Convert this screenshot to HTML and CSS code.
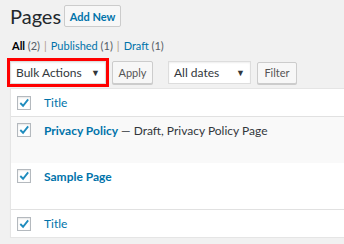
FILE: index.html
```html
<!DOCTYPE html>
<html lang="en">
<head>
    <meta charset="UTF-8">
    <title>Pages</title>
    <link rel="stylesheet" href="styles.css">
</head>
<body>
    <div class="wrap">
        <div class="page-head">
            <h1 class="page-title">Pages</h1>
            <button class="add-new">Add New</button>
        </div>

        <ul class="subsubsub">
            <li class="current">All <span class="count">(2)</span></li>
            <li class="sep">|</li>
            <li><a href="#">Published <span class="count">(1)</span></a></li>
            <li class="sep">|</li>
            <li><a href="#">Draft <span class="count">(1)</span></a></li>
        </ul>

        <div class="tablenav">
            <div class="highlight">
                <div class="select bulk">Bulk Actions <span class="arrow">▼</span></div>
            </div>
            <button class="btn apply">Apply</button>
            <div class="select dates">All dates <span class="arrow">▼</span></div>
            <button class="btn filter">Filter</button>
        </div>

        <div class="list-table">
            <div class="row head">
                <span class="cb"><svg viewBox="0 0 13 13"><path d="M2.5 6.5 L5.5 9.5 L11 2.5" /></svg></span>
                <a class="col-title" href="#">Title</a>
            </div>
            <div class="row item alt">
                <span class="cb"><svg viewBox="0 0 13 13"><path d="M2.5 6.5 L5.5 9.5 L11 2.5" /></svg></span>
                <span class="col-title"><a class="row-title" href="#">Privacy Policy</a> — Draft, Privacy Policy Page</span>
            </div>
            <div class="row item">
                <span class="cb"><svg viewBox="0 0 13 13"><path d="M2.5 6.5 L5.5 9.5 L11 2.5" /></svg></span>
                <span class="col-title"><a class="row-title" href="#">Sample Page</a></span>
            </div>
            <div class="row foot">
                <span class="cb"><svg viewBox="0 0 13 13"><path d="M2.5 6.5 L5.5 9.5 L11 2.5" /></svg></span>
                <a class="col-title" href="#">Title</a>
            </div>
        </div>
    </div>
</body>
</html>
```

FILE: styles.css
```css
/* General */
body {
    margin: 0;
    background: #f1f1f1;
    font-family: Lato, "Open Sans", sans-serif;
    color: #444;
    overflow: hidden;
}

a {
    color: #0073aa;
    text-decoration: none;
}

.wrap {
    padding: 5px 0 0 10px;
    width: 400px;
}

/* Heading */
.page-head {
    display: flex;
    align-items: center;
    height: 22px;
}

.page-title {
    margin: 0;
    font-size: 20px;
    font-weight: 400;
    color: #23282d;
    line-height: 22px;
}

.add-new {
    margin-left: 3px;
    width: 57px;
    height: 22px;
    padding: 0;
    border: 1px solid #ccc;
    border-radius: 2px;
    background: #f7f7f7;
    color: #0073aa;
    font-family: inherit;
    font-size: 11px;
    font-weight: 700;
}

/* Status links */
.subsubsub {
    display: flex;
    margin: 11px 0 0 2px;
    padding: 0;
    list-style: none;
    font-size: 11px;
    line-height: 16px;
    color: #0073aa;
}

.subsubsub .current {
    color: #000;
    font-weight: 700;
}

.subsubsub .count {
    color: #555d66;
    font-weight: 400;
}

.subsubsub .sep {
    color: #b09a88;
    margin: 0 4px;
}

/* Bulk actions bar */
.tablenav {
    display: flex;
    align-items: center;
    margin: 4px 0 0 -3px;
    height: 29px;
}

.highlight {
    border: 3px solid #f00;
}

.select {
    display: flex;
    align-items: center;
    justify-content: space-between;
    box-sizing: border-box;
    height: 23px;
    padding: 0 5px 0 5px;
    background: #fff;
    border: 1px solid #ddd;
    color: #32373c;
    font-size: 12px;
    box-shadow: inset 0 1px 2px rgba(0, 0, 0, 0.07);
}

.select .arrow {
    font-size: 9px;
    color: #32373c;
}

.bulk {
    width: 96px;
}

.dates {
    width: 83px;
    margin-left: 15px;
    padding-left: 5px;
}

.btn {
    box-sizing: border-box;
    height: 23px;
    padding: 0;
    border: 1px solid #ccc;
    border-radius: 2px;
    background: #f7f7f7;
    box-shadow: 0 1px 0 #ccc;
    color: #555;
    font-family: inherit;
    font-size: 11px;
}

.apply {
    margin-left: 3px;
    width: 41px;
}

.filter {
    margin-left: 6px;
    width: 40px;
    height: 22px;
}

/* Table */
.list-table {
    margin-top: 1px;
    background: #fff;
    border: 1px solid #e5e5e5;
    border-right: none;
    box-shadow: 0 1px 1px rgba(0, 0, 0, 0.04);
}

.row {
    display: flex;
    align-items: flex-start;
    box-sizing: border-box;
    padding-left: 6px;
    font-size: 12px;
}

.row.head {
    height: 28px;
    align-items: center;
    border-bottom: 1px solid #e1e1e1;
}

.row.foot {
    height: 28px;
    align-items: center;
    border-top: 1px solid #e1e1e1;
}

.row.item {
    height: 46px;
    padding-top: 6px;
    line-height: 16px;
}

.row.alt {
    background: #f9f9f9;
}

.cb {
    display: block;
    flex: none;
    box-sizing: border-box;
    width: 14px;
    height: 14px;
    border: 1px solid #b4b9be;
    background: #fff;
    box-shadow: inset 0 1px 2px rgba(0, 0, 0, 0.1);
}

.cb svg {
    display: block;
    width: 12px;
    height: 12px;
}

.cb path {
    fill: none;
    stroke: #1e8cbe;
    stroke-width: 2;
}

.col-title {
    margin-left: 13px;
    color: #32373c;
}

.row.head .col-title,
.row.foot .col-title {
    color: #0073aa;
}

.row-title {
    font-weight: 700;
}
```
